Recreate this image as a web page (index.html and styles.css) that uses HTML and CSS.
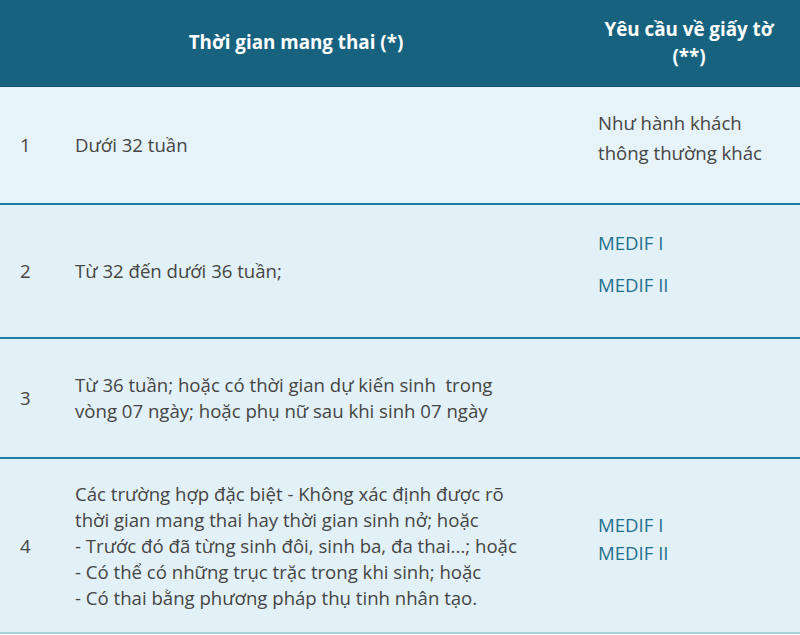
FILE: index.html
```html
<!DOCTYPE html>
<html lang="vi">
<head>
<meta charset="utf-8">
<link rel="stylesheet" href="styles.css">
</head>
<body>
<table class="tbl">
  <colgroup>
    <col class="c-num">
    <col class="c-desc">
    <col class="c-req">
  </colgroup>
  <thead>
    <tr class="head">
      <th></th>
      <th class="h-desc">Thời gian mang thai (*)</th>
      <th class="h-req">Yêu cầu về giấy tờ (**)</th>
    </tr>
  </thead>
  <tbody>
    <tr class="r1">
      <td class="num">1</td>
      <td class="desc">Dưới 32 tuần</td>
      <td class="req req-tall">Như hành khách thông thường khác</td>
    </tr>
    <tr class="r2">
      <td class="num">2</td>
      <td class="desc">Từ 32 đến dưới 36 tuần;</td>
      <td class="req"><p class="link sep">MEDIF I</p><p class="link">MEDIF II</p></td>
    </tr>
    <tr class="r3">
      <td class="num">3</td>
      <td class="desc">Từ 36 tuần; hoặc có thời gian dự kiến sinh&nbsp; trong<br>vòng 07 ngày; hoặc phụ nữ sau khi sinh 07 ngày</td>
      <td class="req"></td>
    </tr>
    <tr class="r4">
      <td class="num">4</td>
      <td class="desc">Các trường hợp đặc biệt - Không xác định được rõ<br>thời gian mang thai hay thời gian sinh nở; hoặc<br>- Trước đó đã từng sinh đôi, sinh ba, đa thai...; hoặc<br>- Có thể có những trục trặc trong khi sinh; hoặc<br>- Có thai bằng phương pháp thụ tinh nhân tạo.</td>
      <td class="req"><p class="link gap">MEDIF I</p><p class="link">MEDIF II</p></td>
    </tr>
  </tbody>
</table>
</body>
</html>
```

FILE: styles.css
```css
html, body {
  margin: 0;
  padding: 0;
  background: #ffffff;
}

.tbl {
  width: 800px;
  border-collapse: collapse;
  table-layout: fixed;
  font-family: "Open Sans", "Liberation Sans", sans-serif;
  font-size: 18.6px;
  color: #454545;
}

.c-num { width: 60px; }
.c-desc { width: 524px; }
.c-req { width: 216px; }

.head {
  background: #17637f;
  color: #ffffff;
  height: 86px;
  border-bottom: 1px solid #0f5570;
}

.head th {
  font-weight: 700;
  font-size: 18.8px;
  line-height: 27px;
  padding: 0;
  vertical-align: middle;
}

.head th.h-desc {
  text-align: center;
  padding: 0 52px 0 0;
}

.head th.h-req {
  text-align: center;
  padding: 0 16px 0 10px;
}

tbody tr {
  border-bottom: 2px solid #1a7fa6;
}

tbody tr.r4 {
  border-bottom: 2px solid #a9d1df;
}

td {
  padding: 0;
  vertical-align: middle;
  line-height: 26px;
  background: #e2f1f7;
}

.r1 td { background: #e6f3f8; }

td.num {
  padding-left: 20px;
}

td.desc {
  padding-left: 15px;
}

td.req {
  padding-left: 14px;
}

.r1 { height: 118px; }
.r2 { height: 134px; }
.r3 { height: 120px; }
.r4 { height: 175px; }

.req-tall {
  line-height: 30px;
  padding-right: 16px;
  padding-bottom: 14px;
}

.req p {
  margin: 0;
}

.link {
  color: #1f6f8e;
}

.req p.sep {
  margin-bottom: 16px;
}

.r2 .req {
  padding-bottom: 15px;
}

.req p.gap {
  margin-bottom: 2px;
}

.r4 .req {
  padding-bottom: 14px;
}
```
